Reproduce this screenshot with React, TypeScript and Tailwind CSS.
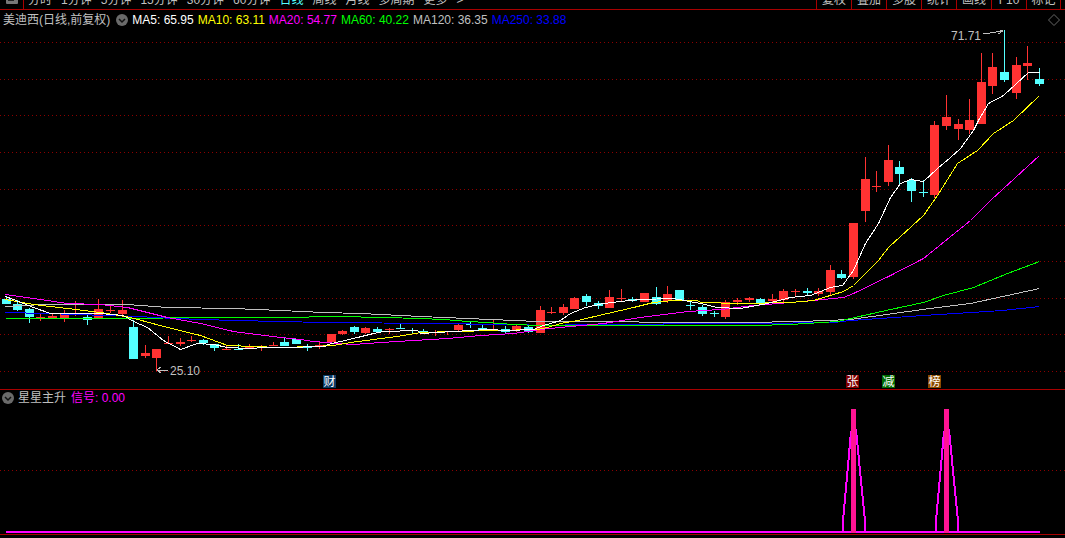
const FONT = "font-['Liberation_Sans','Noto_Sans_CJK_SC',sans-serif]";

const tabs = ["分时", "1分钟", "5分钟", "15分钟", "30分钟", "60分钟", "日线", "周线", "月线", "多周期", "更多", ">"];
const tools = ["复权", "叠加", "多股", "统计", "画线", "F10", "标记"];

const legend = [
  { label: "MA5: 65.95", color: "text-white" },
  { label: "MA10: 63.11", color: "text-[#ffff00]" },
  { label: "MA20: 54.77", color: "text-[#ff00ff]" },
  { label: "MA60: 40.22", color: "text-[#00ff00]" },
  { label: "MA120: 36.35", color: "text-[#c0c0c0]" },
  { label: "MA250: 33.88", color: "text-[#0000ff]" },
];

// [body top, body bottom, high, low, red?] in page pixels
const candles: [number, number, number, number, number][] = [
  [299, 304, 296, 304, 0], [304, 310, 300, 311, 0], [309, 317, 308, 323, 0], [317, 318, 314, 321, 1],
  [316, 318, 314, 318, 1], [314, 318, 310, 322, 1], [313, 314, 301, 316, 1], [317, 320, 315, 325, 0],
  [309, 318, 299, 318, 1], [310, 311, 304, 313, 1], [310, 314, 300, 316, 1], [327, 359, 320, 359, 0],
  [353, 356, 345, 358, 1], [349, 358, 349, 371, 1], [343, 344, 336, 344, 1], [342, 344, 338, 346, 1],
  [340, 341, 336, 342, 1], [340, 343, 339, 345, 0], [344, 348, 344, 351, 0], [349, 350, 345, 350, 1],
  [349, 350, 344, 350, 0], [347, 349, 344, 349, 1], [347, 348, 345, 351, 1], [345, 346, 342, 346, 1],
  [342, 346, 338, 346, 0], [339, 344, 339, 344, 0], [347, 348, 344, 351, 0], [345, 346, 342, 349, 1],
  [334, 342, 334, 342, 1], [331, 334, 330, 335, 1], [327, 332, 326, 334, 0], [328, 333, 327, 334, 1],
  [329, 332, 327, 333, 0], [329, 330, 328, 334, 1], [328, 329, 324, 329, 0], [330, 331, 328, 333, 0],
  [331, 332, 329, 334, 0], [332, 333, 330, 336, 1], [331, 332, 331, 335, 1], [325, 330, 324, 331, 1],
  [324, 325, 322, 328, 0], [328, 330, 325, 331, 0], [324, 325, 320, 330, 1], [329, 332, 326, 333, 0],
  [326, 330, 325, 332, 1], [327, 332, 326, 333, 0], [310, 333, 306, 333, 1], [312, 313, 307, 314, 1],
  [307, 313, 304, 315, 1], [298, 309, 297, 309, 1], [296, 302, 294, 306, 0], [303, 306, 301, 309, 0],
  [297, 308, 290, 308, 1], [298, 299, 289, 301, 1], [299, 301, 297, 302, 0], [293, 302, 293, 302, 1],
  [297, 304, 287, 305, 0], [294, 301, 286, 303, 1], [290, 300, 290, 301, 0], [305, 306, 302, 310, 0],
  [307, 314, 305, 316, 0], [313, 314, 311, 317, 0], [302, 317, 300, 319, 1], [300, 302, 298, 305, 1],
  [298, 300, 297, 302, 1], [299, 303, 298, 303, 0], [299, 301, 294, 302, 1], [291, 300, 289, 302, 1],
  [291, 292, 289, 296, 1], [291, 293, 288, 296, 0], [291, 294, 288, 296, 1], [270, 292, 265, 295, 1],
  [274, 278, 270, 279, 0], [223, 277, 223, 279, 1], [179, 211, 157, 222, 1], [186, 187, 171, 192, 1],
  [160, 182, 145, 186, 1], [167, 174, 161, 185, 0], [180, 191, 178, 202, 0], [192, 193, 180, 197, 0],
  [125, 195, 121, 198, 1], [117, 126, 95, 130, 1], [124, 129, 119, 140, 1], [120, 130, 99, 134, 1],
  [82, 124, 53, 124, 1], [67, 86, 53, 94, 1], [72, 80, 30, 82, 0], [65, 93, 57, 99, 1],
  [63, 66, 46, 80, 1], [79, 84, 68, 86, 0],
];

const ma5 = "5,296 13,299 33,307 50,313 100,313 123,315 133,321 147,327 163,340 180,349 197,343 213,344 227,347 247,348 267,347 280,347 325,346 327,344 340,341 357,337 373,333 383,331 417,330 420,333 453,331 487,329 507,330 533,329 543,325 550,323 560,320 570,313 585,307 603,303 620,301 640,299 673,298 700,303 717,307 740,308 767,303 790,297 810,295 830,287 842,285 853,270 865,243 878,223 890,197 900,183 910,179 923,181 937,168 950,157 960,148 973,130 978,120 988,103 1003,95 1028,72 1039,72";
const ma10 = "5,299 33,304 67,308 100,312 130,317 167,327 200,335 227,345 280,347 313,346 333,345 350,342 373,339 397,336 420,332 453,331 537,329 547,327 560,323 577,320 607,313 633,307 653,302 673,300 697,300 700,302 740,303 790,302 813,300 843,291 853,285 878,260 888,247 923,215 937,195 957,163 977,150 993,133 1013,120 1039,95";
const ma20 = "5,294 33,298 67,303 100,304 127,307 167,317 200,323 233,331 280,337 300,339 313,341 337,343 353,344 380,342 413,340 447,338 480,335 513,333 540,329 570,326 603,323 640,317 687,311 720,309 753,305 790,302 823,299 843,297 853,293 890,275 923,258 970,220 990,200 1039,155";
const ma60 = "5,318 115,318 130,318 197,317 280,317 337,316 383,317 420,318 443,319 467,321 487,322 513,324 540,325 753,325 790,324 837,321 850,318 890,309 923,302 943,295 973,287 1007,273 1039,261";
const ma120 = "5,306 43,304 127,304 167,307 233,308 280,310 323,312 360,313 420,316 467,318 537,321 603,321 673,322 743,322 800,321 850,319 922,309 970,303 1039,288";
const ma250 = "5,312 45,313 138,316 173,318 233,320 280,321 323,322 440,323 557,325 573,324 753,323 833,322 850,320 923,315 1002,310 1039,306";

const gridY = [42, 79, 115, 152, 189, 225, 261, 298, 334, 371];

const badges = [
  { text: "财", pos: "left-[323px]", bg: "bg-[#0b3a66]" },
  { text: "张", pos: "left-[846px]", bg: "bg-[#800000]" },
  { text: "减", pos: "left-[882px]", bg: "bg-[#006c00]" },
  { text: "榜", pos: "left-[928px]", bg: "bg-[#8a4a00]" },
];

const Collapse = () => (
  <svg width="12" height="12" viewBox="0 0 12 12" className="shrink-0">
    <circle cx="6" cy="6" r="6" fill="#6a6a6a" />
    <path d="M3 5 L6 8 L9 5" fill="none" stroke="#111" strokeWidth="1.5" />
  </svg>
);

const PriceChart = () => (
  <svg width="1065" height="359" viewBox="0 30 1065 359" className="block" shapeRendering="crispEdges">
    {gridY.map((y) => (
      <line key={y} x1="0" x2="1065" y1={y + 0.5} y2={y + 0.5} stroke="#8c0000" strokeDasharray="1 3" />
    ))}
    {candles.map(([top, bottom, high, low, red], i) => {
      const x = Math.round(5.5 + 11.61 * i);
      const color = red ? "#ff3232" : "#54ffff";
      return (
        <g key={i} fill={color}>
          <rect x={x} y={high} width="1" height={low - high} />
          <rect x={x - 4} y={top} width="9" height={Math.max(bottom - top, 1)} />
        </g>
      );
    })}
    <g transform="translate(0.5 0.5)" fill="none">
      <polyline points={ma250} stroke="#0000ff" />
      <polyline points={ma120} stroke="#c0c0c0" />
      <polyline points={ma60} stroke="#00ff00" />
      <polyline points={ma20} stroke="#ff00ff" />
      <polyline points={ma10} stroke="#ffff00" />
      <polyline points={ma5} stroke="#ffffff" />
    </g>

    <text x="951" y="40" fill="#c0c0c0" fontSize="12">71.71</text>
    <path d="M983 34 L1003 31 M997 29 L1003 31 L998 34" fill="none" stroke="#c0c0c0" />
    <text x="170" y="375" fill="#c0c0c0" fontSize="12">25.10</text>
    <path d="M157 370 L168 370 M161 367 L157 370 L161 373" fill="none" stroke="#c0c0c0" />
  </svg>
);

const spikes = [853, 946];

const SignalChart = () => (
  <svg width="1065" height="128" viewBox="0 406 1065 128" className="block" shapeRendering="crispEdges">
    <line x1="0" x2="1065" y1="470.5" y2="470.5" stroke="#8c0000" strokeDasharray="1 3" />
    <rect x="6" y="531" width="1034" height="2" fill="#ff00ff" />
    {spikes.map((c) => (
      <g key={c}>
        <polyline
          points={`${c - 10},532 ${c - 10},521 ${c - 2},432 ${c + 3},430 ${c + 12},521 ${c + 12},532`}
          fill="none"
          stroke="#ff00ff"
          strokeWidth="2"
        />
        <rect x={c - 2} y="409" width="5" height="124" fill="#ff1493" />
      </g>
    ))}
  </svg>
);

const App = () => {
  return (
    <div className={`${FONT} flex h-[538px] w-[1065px] flex-col overflow-hidden bg-black text-[12px] leading-[12px] text-[#c0c0c0]`}>
      {/* toolbar, cut off by the window edge */}
      <div className="flex h-[10px] shrink-0 items-end overflow-hidden border-b border-[#a80000] pb-[3px]">
        <div className="mb-[-3px] flex h-[9px] w-[24px] shrink-0 items-start justify-center border-r border-[#a80000]">
          <div className="mt-[-3px] h-[7px] w-[12px] rounded-[1px] bg-[#777] p-[2px]">
            <div className="h-[2px] w-[6px] bg-[#222]" />
          </div>
        </div>
        <div className="ml-[4px] flex gap-[9px]">
          {tabs.map((t) => (
            <span key={t} className={t === "日线" ? "text-[#54ffff]" : ""}>{t}</span>
          ))}
        </div>
        <div className="mb-[-3px] ml-auto mr-[4px] flex h-[9px] items-end">
          {tools.map((t, i) => (
            <div
              key={t}
              className={`flex h-[9px] w-[35px] items-end justify-center overflow-visible border-l border-[#a80000] pb-[3px] ${i === tools.length - 1 ? "border-r" : ""}`}
            >
              <span className="whitespace-nowrap">{t}</span>
            </div>
          ))}
        </div>
      </div>

      {/* legend */}
      <div className="flex h-[20px] shrink-0 items-center pl-[3px]">
        <span className="whitespace-nowrap">美迪西(日线,前复权)</span>
        <div className="ml-[6px]"><Collapse /></div>
        <div className="ml-[4px] flex gap-[4px] whitespace-nowrap">
          {legend.map((m) => (
            <span key={m.label} className={m.color}>{m.label}</span>
          ))}
        </div>
        <svg width="12" height="12" viewBox="0 0 12 12" className="ml-auto mr-[5px]">
          <path d="M6 .5 L11.5 6 L6 11.5 L.5 6 Z" fill="none" stroke="#666" />
        </svg>
      </div>

      {/* price panel */}
      <div className="relative h-[359px] shrink-0">
        <PriceChart />
        {badges.map((b) => (
          <span
            key={b.text}
            className={`absolute top-[345px] flex h-[13px] w-[13px] items-center justify-center text-white ${b.pos} ${b.bg}`}
          >
            {b.text}
          </span>
        ))}
      </div>

      {/* signal panel */}
      <div className="h-[146px] shrink-0 border-y border-[#a80000]">
        <div className="flex h-[16px] items-center pl-[2px]">
          <Collapse />
          <span className="ml-[4px]">星星主升</span>
          <span className="ml-[5px] text-[#ff00ff]">信号: 0.00</span>
        </div>
        <SignalChart />
      </div>
    </div>
  );
};

export default App;
